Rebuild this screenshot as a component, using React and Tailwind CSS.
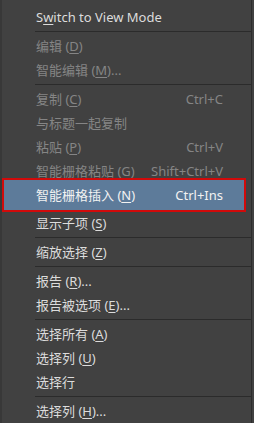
const items = [
  { t: ['S', 'w', 'itch to View Mode'] },
  'sep',
  { t: ['编辑 (', 'D', ')'], dis: true },
  { t: ['智能编辑 (', 'M', ')...'], dis: true },
  'sep',
  { t: ['复制 (', 'C', ')'], k: 'Ctrl+C', dis: true },
  { t: ['与标题一起复制'], dis: true },
  { t: ['粘贴 (', 'P', ')'], k: 'Ctrl+V', dis: true },
  { t: ['智能栅格粘贴 (', 'G', ')'], k: 'Shift+Ctrl+V', dis: true },
  { t: ['智能栅格插入 (', 'N', ')'], k: 'Ctrl+Ins', hi: true },
  { t: ['显示子项 (', 'S', ')'] },
  'sep',
  { t: ['缩放选择 (', 'Z', ')'] },
  'sep',
  { t: ['报告 (', 'R', ')...'] },
  { t: ['报告被选项 (', 'E', ')...'] },
  'sep',
  { t: ['选择所有 (', 'A', ')'] },
  { t: ['选择列 (', 'U', ')'] },
  { t: ['选择行'] },
  'sep',
  { t: ['选择列 (', 'H', ')...'] },
]

function Label({ parts }) {
  const [a, u, b] = parts
  return (
    <span className="whitespace-nowrap">
      {a}
      {u && <span className="underline underline-offset-2 decoration-1">{u}</span>}
      {b}
    </span>
  )
}

function Row({ item }) {
  if (item.hi) {
    return (
      <div className="relative -mt-[3px] ml-[1px] mr-[6px] h-[31px] flex items-center justify-between pl-[33px] pr-[22px] bg-[#5d7b9a] text-[#f2f2f2]">
        <Label parts={item.t} />
        <span className="whitespace-nowrap">{item.k}</span>
        {/* red annotation box */}
        <div className="absolute -top-[2px] -bottom-[1px] -left-[1px] -right-[1px] border-2 border-[#d10a0a] pointer-events-none" />
      </div>
    )
  }
  return (
    <div
      className={
        'h-[24px] flex items-center justify-between pl-[34px] pr-[28px] ' +
        (item.dis ? 'text-[#858585]' : 'text-[#dcdcdc]')
      }
    >
      <Label parts={item.t} />
      {item.k && <span className="whitespace-nowrap">{item.k}</span>}
    </div>
  )
}

export default function App() {
  return (
    <div
      className="w-[254px] h-[423px] bg-[#414141] border-l-2 border-[#383838] pr-[2px] overflow-hidden text-[13px] leading-none"
      style={{ fontFamily: '"Noto Sans", "Noto Sans CJK SC", sans-serif' }}
    >
      <div className="h-full border-r border-[#2d2d2d] pt-[5px] flex flex-col">
        {items.map((it, i) =>
          it === 'sep' ? (
            <div key={i} className="h-[5px] pt-[2px] pl-[33px]">
              <div className="h-px bg-[#2b2b2b]" />
            </div>
          ) : (
            <Row key={i} item={it} />
          )
        )}
      </div>
    </div>
  )
}
